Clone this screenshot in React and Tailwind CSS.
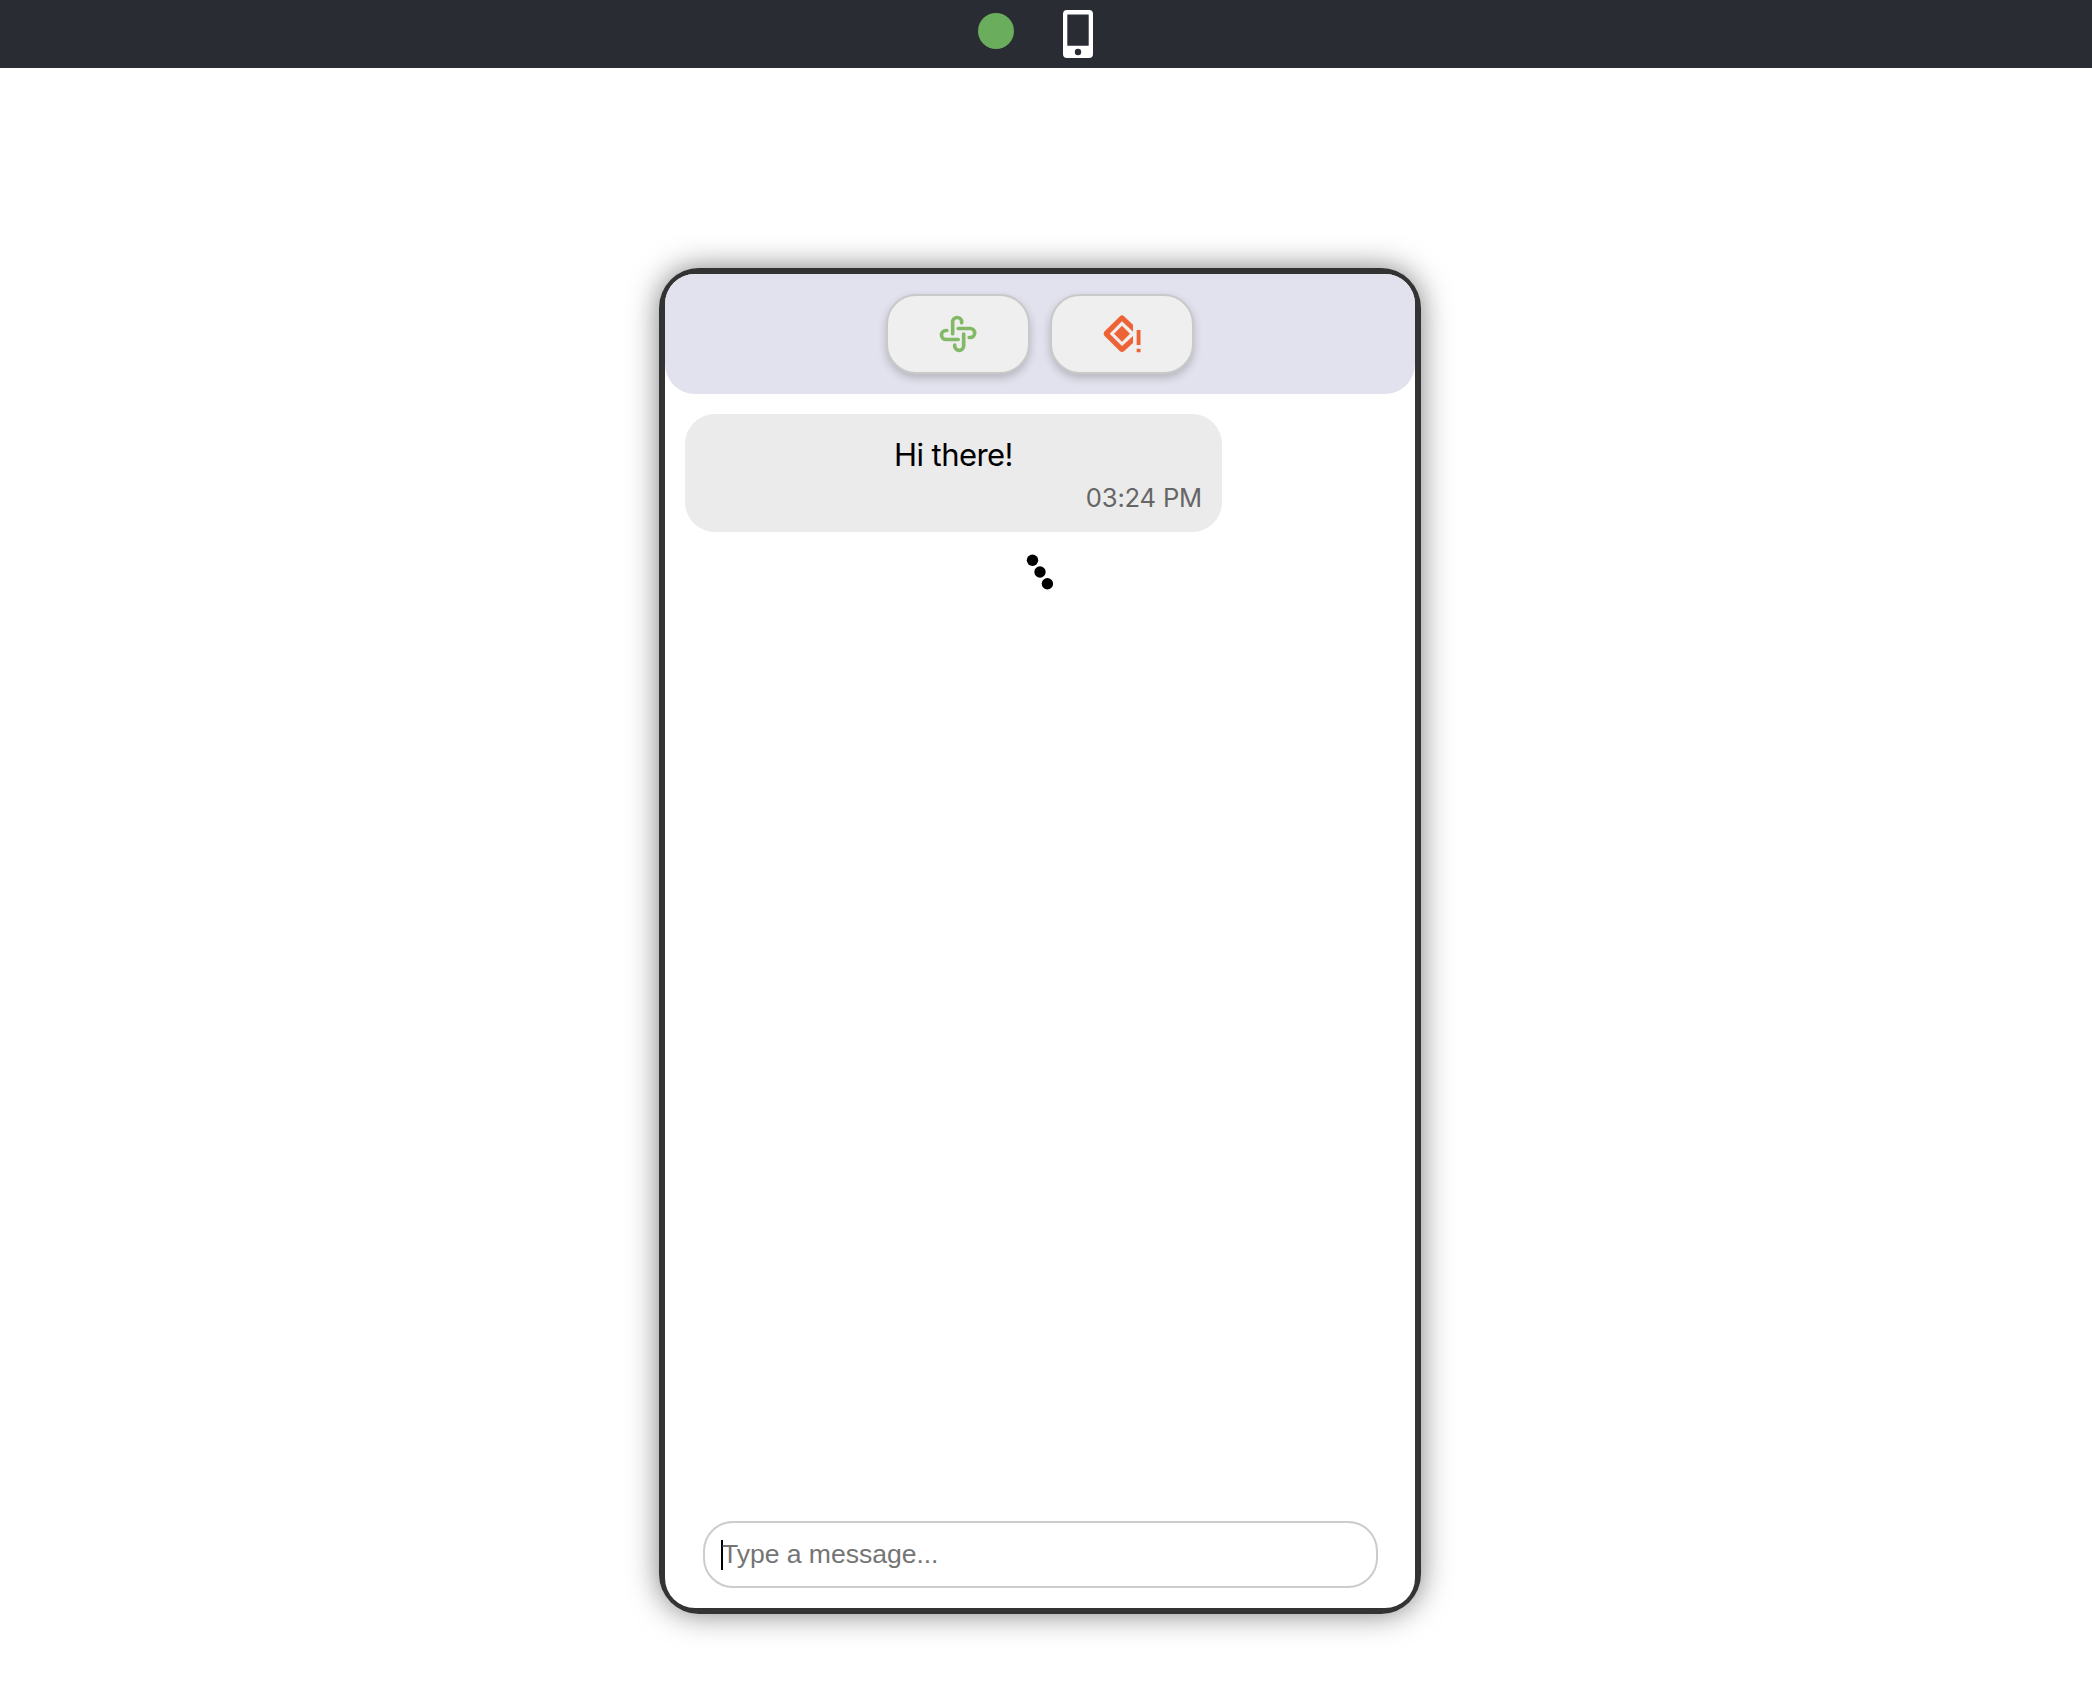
function PhoneIcon() {
  return (
    <svg className="h-12 w-[30px]" viewBox="0 0 30 48" fill="none">
      <path
        fill="#fff"
        fillRule="evenodd"
        d="M4 0H26a4 4 0 0 1 4 4V44a4 4 0 0 1-4 4H4a4 4 0 0 1-4-4V4a4 4 0 0 1 4-4ZM4.300 4.500V35.800H25.700V4.500ZM15 38.800a3.200 3.200 0 1 0 0 6.400a3.200 3.200 0 1 0 0-6.400Z"
      />
    </svg>
  );
}

function KnotIcon() {
  return (
    <svg
      className="size-[38px]"
      viewBox="207 105 114 114"
      fill="none"
      stroke="#83b966"
      strokeWidth="11"
      strokeLinecap="round"
    >
      <path d="M248 161V126a13.500 13.500 0 0 1 27 0V128.500" />
      <path d="M264.500 145.500H300.500a13.500 13.500 0 0 1 0 27H297.500" />
      <path d="M281 162V197.500a13.500 13.500 0 0 1-27 0V195" />
      <path d="M264.500 178.500H228a13.500 13.500 0 0 1 0-27H230.500" />
    </svg>
  );
}

function DiamondAlertIcon() {
  return (
    <svg className="size-[38px]" viewBox="189 105 114 114" fill="#ee6336">
      <path
        fillRule="evenodd"
        d="M240 108.500Q246 103 252 108.500L279 134V155L246 124L209 161L246 198L279 168V189L252 214Q246 219 240 214L194 168Q188 161 194 154Z"
      />
      <path d="M246 137L270 161L246 185L222 161Z" />
      <path d="M290 150H301.500V195H290ZM290 206H301.500V216.500H290Z" />
    </svg>
  );
}

function HeaderButton({ label, children }) {
  return (
    <button
      aria-label={label}
      className="flex h-20 w-36 items-center justify-center rounded-[30px] border-2 border-[#c9c9c9] bg-[#efefef] shadow-[0_4px_8px_rgba(0,0,0,0.2)]"
    >
      {children}
    </button>
  );
}

export default function App() {
  return (
    <div className="flex h-[1702px] w-full flex-col bg-white font-[Inter,sans-serif]">
      <div className="flex h-[68px] shrink-0 items-start bg-[#2a2c34] pl-[978px]">
        <div className="mt-[13px] size-9 rounded-full bg-[#6aad5d]" />
        <div className="mt-2.5 ml-[49px]">
          <PhoneIcon />
        </div>
      </div>
      <main className="mt-[200px] ml-[659px] h-[1346px] w-[762px] rounded-[40px] bg-[#333] p-1.5 shadow-[0_0_30px_rgba(0,0,0,0.5)]">
        <div className="flex h-full flex-col rounded-[30px] bg-white">
          <header className="flex h-[120px] items-center justify-center gap-5 rounded-[30px] bg-[#e2e2ee]">
            <HeaderButton label="Connect">
              <KnotIcon />
            </HeaderButton>
            <HeaderButton label="Report">
              <DiamondAlertIcon />
            </HeaderButton>
          </header>
          <section className="flex flex-1 flex-col px-5 pt-5">
            <div className="flex h-[118px] w-[537px] flex-col rounded-[30px] bg-[#ebebeb] px-5 pt-5">
              <p className="text-center text-[31px] leading-[41px] tracking-[-0.550px] text-black">Hi there!</p>
              <time className="mt-[7px] text-right text-[25.600px] leading-8 tracking-[-0.200px] text-[#666]">
                03:24 PM
              </time>
            </div>
            <svg className="mt-[22px] h-9 w-7 self-center" viewBox="0 0 28 36" aria-label="Typing">
              <circle cx="6.500" cy="6.300" r="5.700" />
              <circle cx="14" cy="18" r="5.700" />
              <circle cx="21.400" cy="29.700" r="5.700" />
            </svg>
          </section>
          <footer className="mr-[37px] mb-5 ml-[38px] flex h-[67px] items-center rounded-[30px] border-2 border-[#ccc] pl-4">
            <span className="h-[30px] w-0.5 bg-black" />
            <span className="-ml-px font-[Liberation_Sans,Arial,sans-serif] text-[26.600px] tracking-[-0.050px] text-[#757575]">
              Type a message...
            </span>
          </footer>
        </div>
      </main>
    </div>
  );
}
